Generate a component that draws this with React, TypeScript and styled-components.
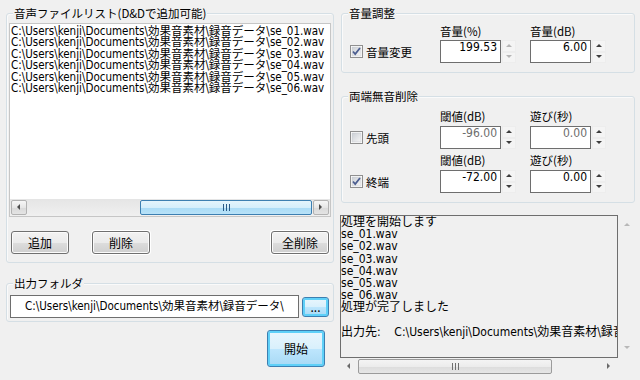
import React from "react";
import styled, { createGlobalStyle } from "styled-components";

const UI = `"Noto Sans CJK JP", "Noto Sans", sans-serif`;
const DATA = `"Liberation Sans Narrow", "DejaVu Sans Condensed", "Noto Sans CJK JP", sans-serif`;

const Global = createGlobalStyle`
  html, body { margin: 0; padding: 0; background: #f0f0f0; }
  body { font-family: ${UI}; font-size: 12px; color: #000; }
`;

const Window = styled.div`
  width: 640px;
  height: 380px;
  box-sizing: border-box;
  background: #f0f0f0;
  display: flex;
  gap: 6px;
  padding: 13px 4px 0 6px;
  overflow: hidden;
`;

const LeftColumn = styled.div`
  width: 328px;
  display: flex;
  flex-direction: column;
`;

const RightColumn = styled.div`
  width: 296px;
  display: flex;
  flex-direction: column;
`;

const Group = styled.div<{ $pt: number; $pb: number; $mt?: number; $mx?: number }>`
  position: relative;
  margin: ${(p) => p.$mt ?? 0}px ${(p) => p.$mx ?? 0}px 0 ${(p) => p.$mx ?? 0}px;
  padding: ${(p) => p.$pt}px 2px ${(p) => p.$pb}px;
  border: 1px solid #d5dfe5;
  border-radius: 3px;
  box-shadow: inset 1px 1px 0 #fafafa;
`;

const Title = styled.span`
  position: absolute;
  top: -8px;
  left: 6px;
  padding: 0 1px;
  background: #f0f0f0;
  font-family: ${UI};
  font-size: 11.5px;
  line-height: 14px;
  color: #000;
  white-space: nowrap;
`;

const ListBox = styled.div`
  height: 194px;
  box-sizing: border-box;
  border: 1px solid #c6c6c6;
  background: #fff;
  display: flex;
  flex-direction: column;
`;

const ListItems = styled.div`
  flex: 1;
  overflow: hidden;
  padding: 2px 0 0 1px;
`;

const ListRow = styled.div`
  white-space: nowrap;
  font-family: ${DATA};
  font-size: 11.5px;
  line-height: 11.4px;
  height: 11.4px;
`;

const HScroll = styled.div<{ $track: string }>`
  height: 17px;
  display: flex;
  align-items: center;
  background: ${(p) => p.$track};
  padding: 0 1px;
`;

const ScrollBtn = styled.div<{ $plain?: boolean }>`
  width: 16px;
  height: 15px;
  box-sizing: border-box;
  display: flex;
  align-items: center;
  justify-content: center;
  border: 1px solid ${(p) => (p.$plain ? "transparent" : "#b2b2b2")};
  border-radius: 2px;
  background: ${(p) =>
    p.$plain ? "transparent" : "linear-gradient(#f6f6f6, #e6e6e6 50%, #d9d9d9 51%, #e4e4e4)"};
`;

const Track = styled.div`
  flex: 1;
  height: 100%;
  display: flex;
  align-items: center;
`;

const Thumb = styled.div<{ $blue?: boolean }>`
  height: 15px;
  box-sizing: border-box;
  border-radius: 2px;
  display: flex;
  align-items: center;
  justify-content: center;
  border: 1px solid ${(p) => (p.$blue ? "#3c7fb1" : "#9b9b9b")};
  background: ${(p) =>
    p.$blue
      ? "linear-gradient(#e3f4fc, #d4eefb 50%, #a9dbf6 51%, #b8e2f8)"
      : "linear-gradient(#f4f4f4, #ececec 50%, #dcdcdc 51%, #e6e6e6)"};
`;

const Grip = ({ color }: { color: string }) => (
  <svg width="7" height="7" viewBox="0 0 7 7">
    <rect x="0" y="0" width="1" height="7" fill={color} />
    <rect x="3" y="0" width="1" height="7" fill={color} />
    <rect x="6" y="0" width="1" height="7" fill={color} />
  </svg>
);

const Arrow = ({ dir, color }: { dir: "l" | "r" | "u" | "d"; color: string }) => {
  const pts = {
    l: "3,0 0,3 3,6",
    r: "0,0 3,3 0,6",
    u: "0,3 3,0 6,3",
    d: "0,0 6,0 3,3",
  }[dir];
  const horiz = dir === "l" || dir === "r";
  return (
    <svg width={horiz ? 4 : 7} height={horiz ? 7 : 4} viewBox={horiz ? "0 0 4 7" : "0 0 7 4"}>
      <polygon points={pts} fill={color} />
    </svg>
  );
};

const ButtonRow = styled.div`
  display: flex;
  gap: 23px;
  margin-top: 14px;
  padding: 0 2px;
`;

const Button = styled.button<{ $w: number; $h: number; $blue?: boolean; $halo?: boolean; $push?: boolean }>`
  width: ${(p) => p.$w}px;
  height: ${(p) => p.$h}px;
  box-sizing: border-box;
  padding: 0;
  margin-left: ${(p) => (p.$push ? "auto" : "0")};
  font-family: ${UI};
  font-size: 12px;
  line-height: 12px;
  color: #000;
  border-radius: 3px;
  border: 1px solid ${(p) => (p.$blue ? "#3c7fb1" : "#707070")};
  background: ${(p) =>
    p.$blue
      ? "linear-gradient(#eaf6fd, #d9f0fc 50%, #bee6fd 51%, #a7d9f5)"
      : "linear-gradient(#f2f2f2, #ebebeb 50%, #dddddd 51%, #cfcfcf)"};
  box-shadow: ${(p) =>
    p.$blue
      ? "inset 0 0 0 2px #5fd0f8"
      : p.$halo
      ? "inset 0 0 0 1px #fbfbfb, 0 0 0 1px #fff"
      : "inset 0 0 0 1px #fbfbfb"};
`;

const FolderRow = styled.div`
  display: flex;
  align-items: center;
  gap: 3px;
  padding-left: 1px;
`;

const PathBox = styled.div`
  width: 289px;
  height: 23px;
  box-sizing: border-box;
  border: 1px solid #6e6e6e;
  background: #fff;
  font-family: ${DATA};
  font-size: 11.5px;
  line-height: 20px;
  padding-left: 14px;
  white-space: nowrap;
  overflow: hidden;
`;

const StartButtonWrap = styled.div`
  display: flex;
  justify-content: flex-end;
  margin: 8px 9px 0 0;
`;

const ParamGrid = styled.div<{ $rowGap: number }>`
  display: grid;
  grid-template-columns: 90px 90px 1fr;
  row-gap: ${(p) => p.$rowGap}px;
  padding-left: 6px;
`;

const CheckCell = styled.label`
  align-self: end;
  height: 23px;
  display: flex;
  align-items: center;
  gap: 3px;
  font-family: ${UI};
  font-size: 11.5px;
`;

const NumCell = styled.div`
  display: flex;
  flex-direction: column;
`;

const NumLabel = styled.div<{ $mb: number }>`
  font-family: ${UI};
  font-size: 11.5px;
  line-height: 14px;
  height: 14px;
  margin-bottom: ${(p) => p.$mb}px;
  white-space: nowrap;
`;

const NumRow = styled.div`
  display: flex;
  gap: 1px;
`;

const NumBox = styled.div<{ $disabled?: boolean }>`
  width: 61px;
  height: 23px;
  box-sizing: border-box;
  border: 1px solid #6e6e6e;
  background: #fff;
  text-align: right;
  padding-right: 3px;
  font-family: ${DATA};
  font-size: 12px;
  line-height: 12px;
  color: ${(p) => (p.$disabled ? "#6d6d6d" : "#000")};
`;

const Spin = styled.div`
  width: 14px;
  height: 23px;
  display: flex;
  flex-direction: column;
`;

const SpinHalf = styled.div`
  flex: 1;
  display: flex;
  align-items: center;
  justify-content: center;
  background: #f4f4f4;
  border: 1px solid #ededed;
  box-sizing: border-box;
`;

const CheckBoxBox = styled.span`
  width: 13px;
  height: 13px;
  display: inline-block;
`;

const LogGrid = styled.div`
  display: grid;
  grid-template-columns: 278px 18px;
  grid-template-rows: 143px 17px;
  margin-top: 12px;
`;

const LogBox = styled.div`
  border: 1px solid #6e6e6e;
  background: #f0f0f0;
  overflow: hidden;
  font-family: ${DATA};
  font-size: 12px;
  line-height: 12.2px;
  white-space: pre;
`;

const LogLine = styled.div`
  height: 12.2px;
`;

const VScroll = styled.div`
  display: flex;
  flex-direction: column;
  justify-content: space-between;
  align-items: center;
  padding: 8px 0 8px;
  background: #f0f0f0;
`;

const Corner = styled.div`
  background: #f0f0f0;
`;

const CheckBox = ({ checked }: { checked: boolean }) => (
  <CheckBoxBox>
    <svg width="13" height="13" viewBox="0 0 13 13">
      <defs>
        <linearGradient id="cbg" x1="0" y1="0" x2="1" y2="1">
          <stop offset="0" stopColor="#cbcfd5" />
          <stop offset="1" stopColor="#f6f6f6" />
        </linearGradient>
      </defs>
      <rect x="0.5" y="0.5" width="12" height="12" fill="#fff" stroke="#8f8f8f" />
      <rect x="2" y="2" width="9" height="9" fill="url(#cbg)" stroke="#c4c7cc" strokeWidth="0.5" />
      {checked && (
        <path d="M3 6.5 L5.2 9 L10 3" fill="none" stroke="#4c5e91" strokeWidth="1.8" />
      )}
    </svg>
  </CheckBoxBox>
);

const NumField = ({
  label,
  value,
  mb,
  disabled,
  dimArrows,
}: {
  label: string;
  value: string;
  mb: number;
  disabled?: boolean;
  dimArrows?: boolean;
}) => {
  const c = dimArrows ? "#b5b5b5" : "#3d3d3d";
  return (
    <NumCell>
      <NumLabel $mb={mb}>{label}</NumLabel>
      <NumRow>
        <NumBox $disabled={disabled}>{value}</NumBox>
        <Spin>
          <SpinHalf>
            <Arrow dir="u" color={c} />
          </SpinHalf>
          <SpinHalf>
            <Arrow dir="d" color={c} />
          </SpinHalf>
        </Spin>
      </NumRow>
    </NumCell>
  );
};

const PATH = "C:\\Users\\kenji\\Documents\\効果音素材\\録音データ\\";
const files = ["se_01.wav", "se_02.wav", "se_03.wav", "se_04.wav", "se_05.wav", "se_06.wav"];

export default function App() {
  return (
    <>
      <Global />
      <Window>
        <LeftColumn>
          <Group $pt={9} $pb={8}>
            <Title>音声ファイルリスト(D&amp;Dで追加可能)</Title>
            <ListBox>
              <ListItems>
                {files.map((f) => (
                  <ListRow key={f}>
                    {PATH}
                    {f}
                  </ListRow>
                ))}
              </ListItems>
              <HScroll $track="linear-gradient(#e5e5e5, #f0f0f0)">
                <ScrollBtn>
                  <Arrow dir="l" color="#4d4d4d" />
                </ScrollBtn>
                <Track>
                  <Thumb $blue style={{ marginLeft: 113, width: 172 }}>
                    <Grip color="#2a5a86" />
                  </Thumb>
                </Track>
                <ScrollBtn>
                  <Arrow dir="r" color="#4d4d4d" />
                </ScrollBtn>
              </HScroll>
            </ListBox>
            <ButtonRow>
              <Button $w={58} $h={23}>追加</Button>
              <Button $w={58} $h={23} $halo>削除</Button>
              <Button $w={58} $h={23} $halo $push>全削除</Button>
            </ButtonRow>
          </Group>

          <Group $pt={11} $pb={3} $mt={20}>
            <Title>出力フォルダ</Title>
            <FolderRow>
              <PathBox>{PATH}</PathBox>
              <Button $w={27} $h={20} $blue>...</Button>
            </FolderRow>
          </Group>

          <StartButtonWrap>
            <Button $w={58} $h={37} $blue>開始</Button>
          </StartButtonWrap>
        </LeftColumn>

        <RightColumn>
          <Group $pt={10} $pb={9} $mx={1}>
            <Title>音量調整</Title>
            <ParamGrid $rowGap={0}>
              <CheckCell>
                <CheckBox checked />
                音量変更
              </CheckCell>
              <NumField label="音量(%)" value="199.53" mb={2} dimArrows />
              <NumField label="音量(dB)" value="6.00" mb={2} />
            </ParamGrid>
          </Group>

          <Group $pt={12} $pb={9} $mt={23} $mx={1}>
            <Title>両端無音削除</Title>
            <ParamGrid $rowGap={4}>
              <CheckCell>
                <CheckBox checked={false} />
                先頭
              </CheckCell>
              <NumField label="閾値(dB)" value="-96.00" mb={3} disabled />
              <NumField label="遊び(秒)" value="0.00" mb={3} disabled />
              <CheckCell>
                <CheckBox checked />
                終端
              </CheckCell>
              <NumField label="閾値(dB)" value="-72.00" mb={3} />
              <NumField label="遊び(秒)" value="0.00" mb={3} />
            </ParamGrid>
          </Group>

          <LogGrid>
            <LogBox>
              <LogLine>処理を開始します</LogLine>
              {files.map((f) => (
                <LogLine key={f}>{f}</LogLine>
              ))}
              <LogLine>処理が完了しました</LogLine>
              <LogLine> </LogLine>
              <LogLine>{"出力先:    " + PATH}</LogLine>
            </LogBox>
            <VScroll>
              <Arrow dir="u" color="#b8b8b8" />
              <Arrow dir="d" color="#b8b8b8" />
            </VScroll>
            <HScroll $track="#f0f0f0">
              <ScrollBtn $plain>
                <Arrow dir="l" color="#6a6a6a" />
              </ScrollBtn>
              <Track>
                <Thumb style={{ marginLeft: 1, width: 194 }}>
                  <Grip color="#6f6f6f" />
                </Thumb>
              </Track>
              <ScrollBtn $plain>
                <Arrow dir="r" color="#6a6a6a" />
              </ScrollBtn>
            </HScroll>
            <Corner />
          </LogGrid>
        </RightColumn>
      </Window>
    </>
  );
}
